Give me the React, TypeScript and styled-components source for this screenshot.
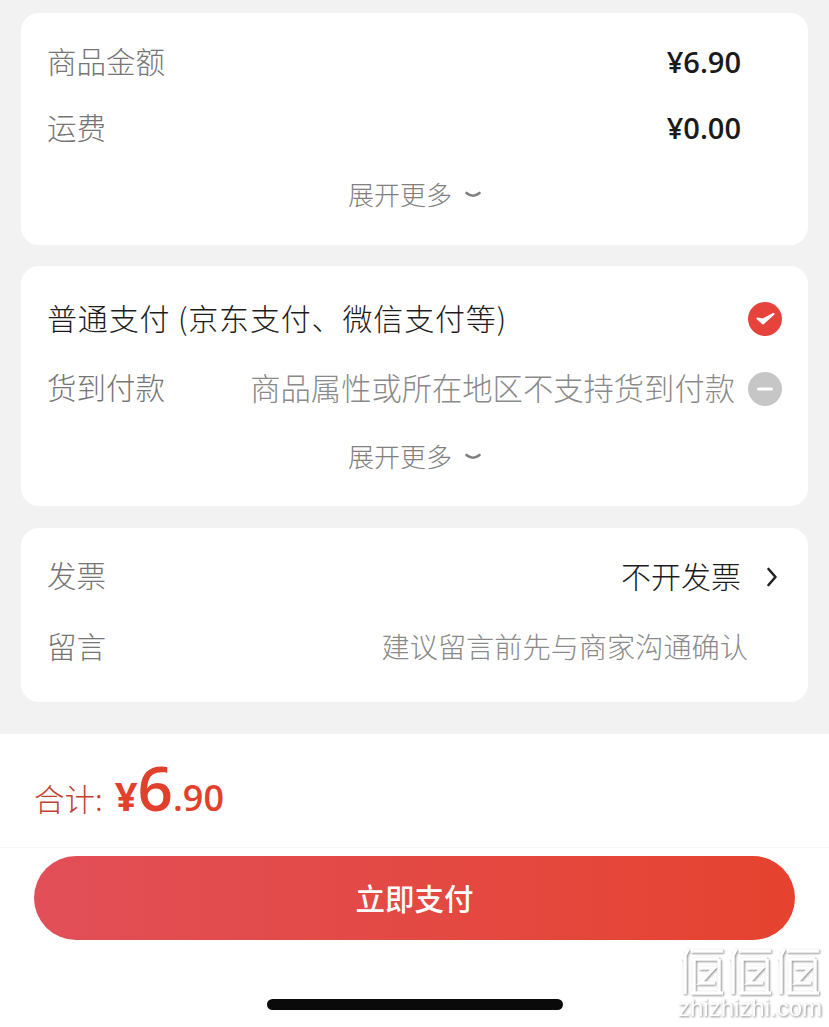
import React from 'react';
import styled, { createGlobalStyle } from 'styled-components';

const GlobalStyle = createGlobalStyle`
  html, body {
    margin: 0;
    padding: 0;
    background: #f2f2f2;
  }
  body {
    font-family: "Noto Sans CJK SC", "Noto Sans", sans-serif;
  }
`;

const Page = styled.div`
  position: relative;
  width: 829px;
  height: 1027px;
  overflow: hidden;
  display: flex;
  flex-direction: column;
`;

const Cards = styled.div`
  display: flex;
  flex-direction: column;
  gap: 21px;
  padding: 13px 21px 32px;
`;

const Card = styled.section<{ $height: number; $top: number; $after?: number }>`
  height: ${(p) => p.$height}px;
  box-sizing: border-box;
  margin-bottom: ${(p) => p.$after ?? 0}px;
  padding: ${(p) => p.$top}px 26px 0 26px;
  background: #fff;
  border-radius: 18px;
  display: flex;
  flex-direction: column;
`;

const Row = styled.div<{ $height: number }>`
  height: ${(p) => p.$height}px;
  display: flex;
  align-items: center;
  justify-content: space-between;
  flex-shrink: 0;
`;

const Label = styled.span<{ $dark?: boolean }>`
  padding-bottom: 4px;
  font-size: ${(p) => (p.$dark ? 30 : 29.5)}px;
  font-weight: 300;
  letter-spacing: ${(p) => (p.$dark ? 0.85 : 0)}px;
  line-height: 1;
  white-space: nowrap;
  color: ${(p) => (p.$dark ? '#1c1c1c' : '#757575')};
`;

const Price = styled.span`
  margin-right: 41px;
  padding-bottom: 3px;
  font-family: "Open Sans", sans-serif;
  font-size: 29px;
  font-weight: 600;
  line-height: 1;
  color: #1a1a1a;
`;

const Right = styled.div`
  display: flex;
  align-items: center;
`;

const Hint = styled.span<{ $gap: number; $size: number }>`
  margin-right: ${(p) => p.$gap}px;
  padding-bottom: 4px;
  font-size: ${(p) => p.$size}px;
  font-weight: 300;
  line-height: 1;
  white-space: nowrap;
  color: #8a8a8a;
`;

const Value = styled.span`
  margin-right: 25px;
  padding-bottom: 4px;
  font-size: 30px;
  font-weight: 300;
  line-height: 1;
  color: #1c1c1c;
`;

const Expand = styled.div`
  display: flex;
  justify-content: center;
  align-items: center;
  gap: 13px;
  height: 66px;
  padding: 0 0 4px 0;
  box-sizing: border-box;
  font-size: 26px;
  font-weight: 300;
  color: #808080;
`;

const ChevronIcon = styled.svg`
  margin-top: 3px;
`;

const ArrowIcon = styled.svg`
  margin-right: 4px;
`;

const Footer = styled.footer`
  flex: 1;
  background: #fff;
  display: flex;
  flex-direction: column;
`;

const TotalBar = styled.div`
  height: 114px;
  box-sizing: border-box;
  padding: 22px 0 0 34px;
  border-bottom: 1px solid #f7f7f7;
  display: flex;
  align-items: baseline;
  color: #e1402c;
`;

const TotalLabel = styled.span`
  font-size: 30.5px;
  font-weight: 300;
  margin-right: 12px;
  color: #c2402f;
`;

const Yen = styled.span`
  font-family: "Open Sans", sans-serif;
  font-size: 40px;
  font-weight: 700;
`;

const BigDigit = styled.span`
  font-family: "Open Sans", sans-serif;
  font-size: 62px;
  font-weight: 600;
  line-height: 1;
`;

const Cents = styled.span`
  font-family: "Open Sans", sans-serif;
  font-size: 36px;
  font-weight: 600;
`;

const PayButton = styled.button`
  display: block;
  width: 761px;
  height: 84px;
  margin: 8px 0 0 34px;
  padding: 0 0 2px;
  border: 0;
  border-radius: 42px;
  background: linear-gradient(90deg, #e24f58 0%, #e5432f 100%);
  color: #fff;
  font-family: inherit;
  font-size: 29.5px;
  font-weight: 500;
`;

const HomeBar = styled.div`
  width: 296px;
  height: 11px;
  margin: 59px 0 0 267px;
  border-radius: 6px;
  background: #0a0a0a;
`;

const Watermark = styled.div`
  position: absolute;
  left: 678px;
  top: 946px;
  width: 144px;
  display: flex;
  flex-direction: column;
  align-items: center;
  filter: drop-shadow(1px 1px 1px rgba(0, 0, 0, 0.45));
`;

const WatermarkText = styled.span`
  font-family: "Liberation Sans", sans-serif;
  font-size: 24px;
  line-height: 24px;
  white-space: nowrap;
  color: #fff;
`;

const Chevron = () => (
  <ChevronIcon width="16" height="8" viewBox="0 0 16 8" fill="none">
    <path d="M1.5 2C5.5 5.5 10.5 5.5 14.5 2" stroke="#808080" strokeWidth="2.6" strokeLinecap="round" />
  </ChevronIcon>
);

const Arrow = () => (
  <ArrowIcon width="12" height="22" viewBox="0 0 12 22" fill="none">
    <path d="M2.5 3 9.5 11 2.5 19" stroke="#222" strokeWidth="2.6" strokeLinecap="round" strokeLinejoin="round" />
  </ArrowIcon>
);

const Checked = () => (
  <svg width="34" height="34" viewBox="0 0 34 34">
    <circle cx="17" cy="17" r="17" fill="#e5433b" />
    <path d="M9.5 16.5 15 21.5 25.5 12 15 17.5 Z" fill="#fff" stroke="#fff" strokeWidth="2" strokeLinejoin="round" />
  </svg>
);

const Disabled = () => (
  <svg width="34" height="34" viewBox="0 0 34 34">
    <circle cx="17" cy="17" r="17" fill="#c6c6c6" />
    <rect x="9" y="15.5" width="16" height="3" rx="1.5" fill="#fff" />
  </svg>
);

const LogoMark = () => (
  <svg width="142" height="50" viewBox="0 0 142 50" fill="none" stroke="#fff" strokeWidth="3.5">
    {[0, 48, 96].map((x) => (
      <g key={x} transform={`translate(${x} 0)`}>
        <path d="M9 3 4 14M6 10V48" />
        <path d="M12 5H44M15 13V46M40 13V46M12 47H44M15 13H40" />
        <path d="M20 22H35L21 37H36" />
      </g>
    ))}
  </svg>
);

export default function App() {
  return (
    <Page>
      <GlobalStyle />
      <Cards>
        <Card $height={232} $top={17}>
          <Row $height={66}>
            <Label>商品金额</Label>
            <Price>¥6.90</Price>
          </Row>
          <Row $height={66}>
            <Label>运费</Label>
            <Price>¥0.00</Price>
          </Row>
          <Expand>
            展开更多
            <Chevron />
          </Expand>
        </Card>
        <Card $height={240} $top={18} $after={1}>
          <Row $height={70}>
            <Label $dark>普通支付 (京东支付、微信支付等)</Label>
            <Checked />
          </Row>
          <Row $height={70}>
            <Label>货到付款</Label>
            <Right>
              <Hint $gap={13} $size={30.3}>商品属性或所在地区不支持货到付款</Hint>
              <Disabled />
            </Right>
          </Row>
          <Expand>
            展开更多
            <Chevron />
          </Expand>
        </Card>
        <Card $height={174} $top={14}>
          <Row $height={70}>
            <Label>发票</Label>
            <Right>
              <Value>不开发票</Value>
              <Arrow />
            </Right>
          </Row>
          <Row $height={72}>
            <Label>留言</Label>
            <Hint $gap={34} $size={28.2}>建议留言前先与商家沟通确认</Hint>
          </Row>
        </Card>
      </Cards>
      <Footer>
        <TotalBar>
          <TotalLabel>合计:</TotalLabel>
          <Yen>¥</Yen>
          <BigDigit>6</BigDigit>
          <Cents>.90</Cents>
        </TotalBar>
        <PayButton>立即支付</PayButton>
        <HomeBar />
      </Footer>
      <Watermark>
        <LogoMark />
        <WatermarkText>zhizhizhi.com</WatermarkText>
      </Watermark>
    </Page>
  );
}
